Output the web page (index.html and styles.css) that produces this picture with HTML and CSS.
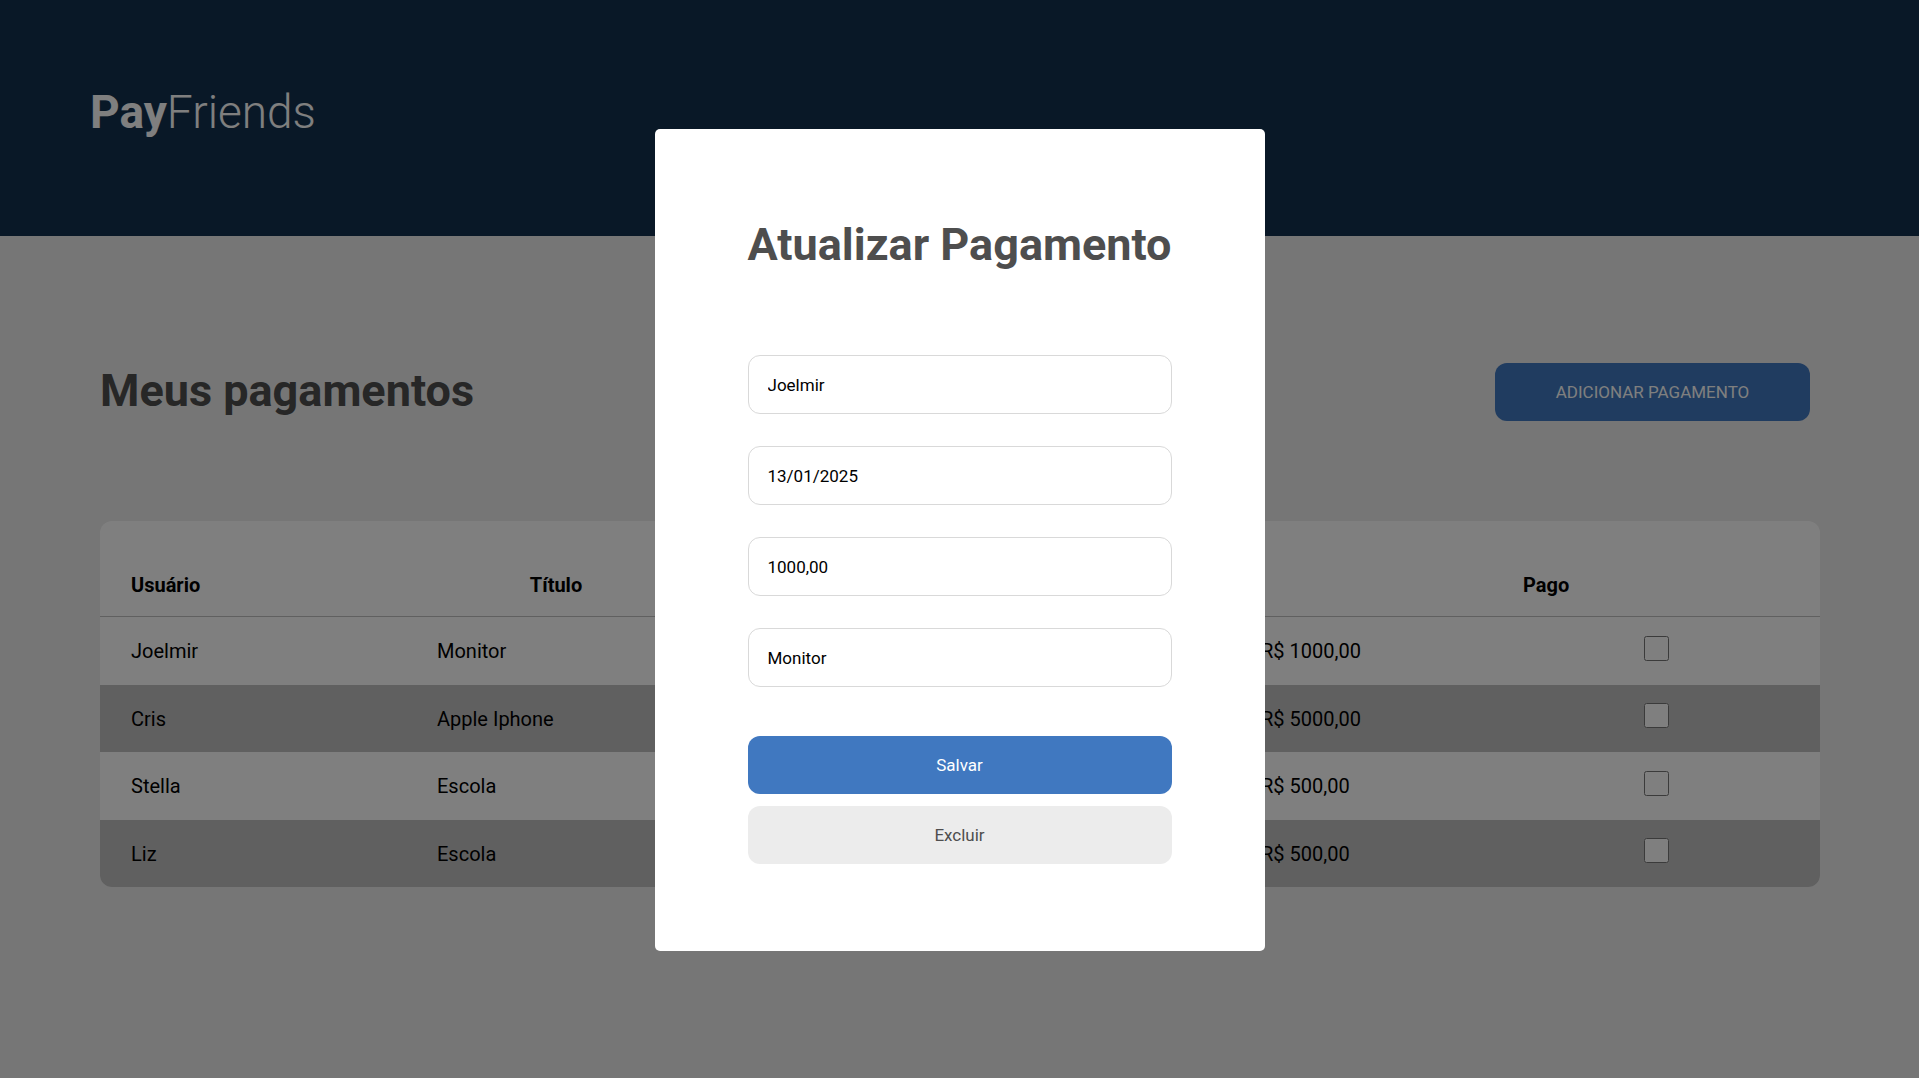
FILE: index.html
```html
<!DOCTYPE html>
<html lang="pt-BR">
<head>
  <meta charset="utf-8">
  <meta name="viewport" content="width=device-width, initial-scale=1">
  <title>PayFriends</title>
  <link rel="stylesheet" href="styles.css">
</head>
<body>
  <header class="header">
    <a class="logo" href="#"><strong>Pay</strong>Friends</a>
  </header>

  <main class="content">
    <div class="toolbar">
      <h1 class="title">Meus pagamentos</h1>
      <button class="button button-primary button-add" type="button">ADICIONAR PAGAMENTO</button>
    </div>

    <table class="payments">
      <colgroup>
        <col class="col-user">
        <col class="col-name">
        <col class="col-date">
        <col class="col-value">
        <col class="col-paid">
      </colgroup>
      <thead>
        <tr>
          <th scope="col">Usuário</th>
          <th scope="col" class="center">Título</th>
          <th scope="col">Data</th>
          <th scope="col">Valor</th>
          <th scope="col">Pago</th>
        </tr>
      </thead>
      <tbody>
        <tr>
          <td>Joelmir</td>
          <td>Monitor</td>
          <td>13/01/2025</td>
          <td class="value">R$ 1000,00</td>
          <td class="center"><input class="check" type="checkbox" aria-label="Pago: Joelmir"></td>
        </tr>
        <tr>
          <td>Cris</td>
          <td>Apple Iphone</td>
          <td>13/01/2025</td>
          <td class="value">R$ 5000,00</td>
          <td class="center"><input class="check" type="checkbox" aria-label="Pago: Cris"></td>
        </tr>
        <tr>
          <td>Stella</td>
          <td>Escola</td>
          <td>13/01/2025</td>
          <td class="value">R$ 500,00</td>
          <td class="center"><input class="check" type="checkbox" aria-label="Pago: Stella"></td>
        </tr>
        <tr>
          <td>Liz</td>
          <td>Escola</td>
          <td>13/01/2025</td>
          <td class="value">R$ 500,00</td>
          <td class="center"><input class="check" type="checkbox" aria-label="Pago: Liz"></td>
        </tr>
      </tbody>
    </table>
  </main>

  <div class="overlay">
    <form class="modal" role="dialog" aria-modal="true" aria-labelledby="modal-title">
      <h2 class="title" id="modal-title">Atualizar Pagamento</h2>
      <div class="fields">
        <input class="field" type="text" aria-label="Usuário" value="Joelmir">
        <input class="field" type="text" aria-label="Data" value="13/01/2025">
        <input class="field" type="text" aria-label="Valor" value="1000,00">
        <input class="field" type="text" aria-label="Título" value="Monitor">
      </div>
      <div class="actions">
        <button class="button button-primary" type="submit">Salvar</button>
        <button class="button button-secondary" type="button">Excluir</button>
      </div>
    </form>
  </div>
</body>
</html>
```
FILE: styles.css
```css
* {
  box-sizing: border-box;
}

body {
  margin: 0;
  min-height: 100vh;
  background: #ececec;
  color: #000;
  font-family: Roboto, sans-serif;
  font-size: 20px;
  line-height: 24px;
}

.header {
  display: flex;
  align-items: flex-start;
  height: 236px;
  padding: 84px 90px;
  background: #12304e;
}

.logo {
  color: #fff;
  font-size: 46px;
  font-weight: 300;
  line-height: 56px;
  text-decoration: none;
}

.logo strong {
  font-weight: 700;
}

.content {
  padding: 127px 99px 0 100px;
}

.toolbar {
  display: flex;
  align-items: flex-start;
  justify-content: space-between;
  margin-bottom: 100px;
  padding-right: 10px;
}

.title {
  margin: 0;
  color: #4e4e4e;
  font-size: 45px;
  font-weight: 700;
  line-height: 56px;
  white-space: nowrap;
}

.button {
  height: 58px;
  border: 0;
  border-radius: 12px;
  font-family: inherit;
  font-size: 17px;
  cursor: pointer;
}

.button-primary {
  background: #4078c0;
  color: #fff;
}

.button-secondary {
  background: #ececec;
  color: #4e4e4e;
}

.button-add {
  width: 315px;
}

.payments {
  width: 100%;
  table-layout: fixed;
  border-spacing: 0;
  border-radius: 12px;
  background: #fff;
  overflow: hidden;
}

.col-user {
  width: 306px;
}

.col-name {
  width: 300px;
}

.col-date {
  width: 324px;
}

.col-paid {
  width: 328px;
}

.payments th,
.payments td {
  padding: 0 31px;
  text-align: left;
}

.payments th {
  height: 96px;
  padding-top: 32px;
  border-bottom: 1px solid #c0c0c0;
  font-weight: 700;
}

.payments td {
  height: 68px;
}

.payments tbody tr:nth-child(even) td {
  height: 67px;
  background: #c0c0c0;
}

.payments .value {
  padding-left: 231px;
}

.payments .center {
  text-align: center;
}

.check {
  display: inline-block;
  width: 25px;
  height: 25px;
  margin: 0 0 6px;
  vertical-align: middle;
}

.overlay {
  position: fixed;
  inset: 0;
  display: flex;
  align-items: center;
  justify-content: center;
  padding-top: 2px;
  background: rgba(0, 0, 0, 0.5);
}

.modal {
  width: 610px;
  padding: 88px 93px 87px;
  border-radius: 5px;
  background: #fff;
}

.modal .title {
  margin-bottom: 82px;
}

.fields {
  display: grid;
  gap: 32px;
  margin-bottom: 49px;
}

.field {
  width: 100%;
  height: 59px;
  padding: 0 19px;
  border: 1px solid #d9d9d9;
  border-radius: 12px;
  background: #fff;
  color: #000;
  font-family: inherit;
  font-size: 17px;
}

.actions {
  display: grid;
  gap: 12px;
}
```
